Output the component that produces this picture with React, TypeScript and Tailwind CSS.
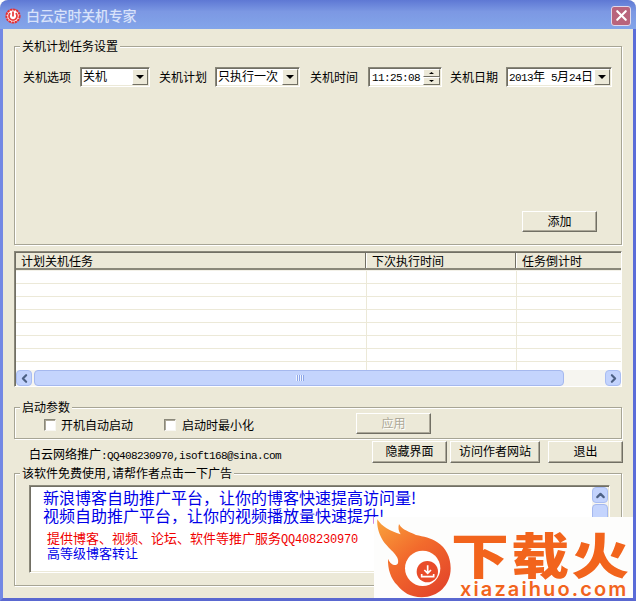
import type { ReactNode } from "react";
import { ChevronLeft, ChevronRight, ChevronUp, X } from "lucide-react";

const ROWS = [1, 2, 3, 4, 5, 6, 7, 8];

// Half-width characters take exactly half of a CJK cell
const Latin = ({ children }: { children: ReactNode }) => (
  <span className="font-['Liberation_Mono'] text-[11px] leading-none tracking-[-0.6px] whitespace-pre">
    {children}
  </span>
);

const GroupBox = ({
  title,
  className,
  children,
}: {
  title: ReactNode;
  className: string;
  children: ReactNode;
}) => (
  <section
    className={`border border-[#a7a595] shadow-[inset_1px_1px_0_#fff,1px_1px_0_#fff] ${className}`}
  >
    <h2 className="-mt-2 ml-[5px] h-3.5 w-fit bg-[#ece9d8] px-0.5 leading-3.5">
      {title}
    </h2>
    {children}
  </section>
);

const Button = ({
  className,
  disabled,
  children,
}: {
  className: string;
  disabled?: boolean;
  children: ReactNode;
}) => (
  <button
    type="button"
    disabled={disabled}
    className={`flex items-center justify-center border border-t-white border-l-white border-r-[#716f64] border-b-[#716f64] pb-0.5 shadow-[inset_-1px_-1px_0_#aca899] disabled:text-[#aca899] disabled:[text-shadow:1px_1px_0_#fff] ${className}`}
  >
    {children}
  </button>
);

const Caret = ({ className = "h-1 w-2" }: { className?: string }) => (
  <svg viewBox="0 0 8 4" preserveAspectRatio="none" className={className}>
    <path d="M0 0h8L4 4z" fill="#000" />
  </svg>
);

const FIELD =
  "flex h-5 shrink-0 border border-t-[#8a887a] border-l-[#8a887a] border-r-white border-b-white bg-white shadow-[inset_1px_1px_0_#716f64,inset_-1px_-1px_0_#ece9d8]";

const Select = ({ className, children }: { className: string; children: ReactNode }) => (
  <div className={`${FIELD} p-px ${className}`}>
    <span className="grow pl-px leading-[14px] whitespace-nowrap">{children}</span>
    <span className="flex h-4 w-4 shrink-0 items-center justify-center border border-t-white border-l-white border-r-[#716f64] border-b-[#716f64] bg-[#ece9d8]">
      <Caret />
    </span>
  </div>
);

const Checkbox = () => (
  <span className="h-3 w-3 border border-t-[#8a887a] border-l-[#8a887a] border-r-[#f8f7f2] border-b-[#f8f7f2] bg-white shadow-[inset_1px_1px_0_#aca899]" />
);

const SCROLL_BUTTON =
  "flex shrink-0 items-center justify-center rounded-sm border border-[#a9bdf2] bg-[#c3d3fd] text-[#4d6185]";

const FlameLogo = () => (
  <svg viewBox="0 0 249 246" className="h-[82px] w-[83px]">
    <defs>
      <linearGradient id="flame" x1="0" y1="0" x2="0.75" y2="1">
        <stop offset="0" stopColor="#f9a33c" />
        <stop offset="0.5" stopColor="#f26a2c" />
        <stop offset="1" stopColor="#e4472a" />
      </linearGradient>
    </defs>
    <path
      fill="url(#flame)"
      d="M22 7C35 29 60 42 92 52C85 42 84 31 87 21C98 40 118 44 138 54C160 59 184 62 202 76C228 93 242 120 242 154C242 205 204 241 155 241C122 241 98 226 82 205C62 184 53 156 54 125C62 146 80 149 84 138C91 115 51 94 36 66C26 48 20 27 22 7Z"
    />
    <circle cx="158" cy="154" r="53" fill="#fff" />
    <circle cx="172" cy="164" r="32" fill="#e94c2a" />
    <path
      d="M173 145v22M163 159l10 10 10-10M155 171v8h36v-8"
      fill="none"
      stroke="#fff"
      strokeWidth="5"
    />
  </svg>
);

const App = () => {
  return (
    <div className="relative flex h-[601px] w-[636px] flex-col overflow-hidden rounded-t-lg bg-[#ece9d8] font-['Noto_Sans_CJK_SC',sans-serif] text-[12px] text-black">
      <header className="flex h-[29px] shrink-0 items-center bg-linear-to-b from-[#5e78d4] via-[#7c98e3] via-40% to-[#83a5ea] pt-0.5 pr-[5px] pl-[5px]">
        <svg viewBox="0 0 16 16" className="h-4 w-4">
          <circle cx="8" cy="8" r="6.6" fill="#fff" stroke="#e82f2f" strokeWidth="2" strokeDasharray="2.5 0.6" />
          <path d="M5.2 5.2a4 4 0 1 0 5.6 0M8 3.5v5" fill="none" stroke="#e84040" strokeWidth="1.8" />
        </svg>
        <h1 className="ml-[5px] grow text-[14px] font-medium tracking-[-0.2px] text-[#d8e2fa]">
          白云定时关机专家
        </h1>
        <button
          type="button"
          className="flex h-5 w-5 items-center justify-center rounded-[3px] border border-[#dfd9ec] bg-[#b9647c] text-white"
        >
          <X size={17} strokeWidth={3} className="shrink-0" />
        </button>
      </header>

      <main className="flex grow flex-col border-x-3 border-b-3 border-l-[#7388e4] border-r-[#5a6cd8] border-b-[#5a68d0] px-[11px] pt-[17px]">
        <GroupBox title="关机计划任务设置" className="h-[199px] shrink-0">
          <div className="mt-3.5 flex h-5 items-center pl-2">
            <label className="w-[57px] shrink-0">关机选项</label>
            <Select className="w-[70px]">关机</Select>
            <label className="ml-[9px] w-14 shrink-0">关机计划</label>
            <Select className="w-[85px]">只执行一次</Select>
            <label className="ml-2.5 w-[58px] shrink-0">关机时间</label>
            <div className={`${FIELD} w-[74px] p-px`}>
              <span className="grow pl-0.5 leading-[14px]">
                <Latin>11:25:08</Latin>
              </span>
              <span className="flex w-[17px] flex-col bg-[#ece9d8]">
                <span className="flex h-2 items-center justify-center border border-t-white border-l-white border-r-[#716f64] border-b-[#716f64]">
                  <Caret className="h-0.5 w-[5px] rotate-180" />
                </span>
                <span className="flex h-2 items-center justify-center border border-t-white border-l-white border-r-[#716f64] border-b-[#716f64]">
                  <Caret className="h-0.5 w-[5px]" />
                </span>
              </span>
            </div>
            <label className="ml-2 w-14 shrink-0">关机日期</label>
            <Select className="w-[106px]">
              <Latin>2013</Latin>年<Latin> 5</Latin>月<Latin>24</Latin>日
            </Select>
          </div>
          <Button className="mt-[124px] ml-[507px] h-[21px] w-[75px]">添加</Button>
        </GroupBox>

        <section className="mt-1.5 flex h-[136px] shrink-0 flex-col border border-t-[#8a887a] border-l-[#8a887a] border-r-white border-b-white bg-white shadow-[inset_1px_1px_0_#716f64]">
          <div className="mt-px ml-px grid h-[17px] shrink-0 grid-cols-[350px_150px_1fr] border-b-2 border-[#8a887a] bg-[#ece9d8] leading-[15px]">
            <span className="border-r border-[#716f64] pl-[5px]">计划关机任务</span>
            <span className="border-r border-l border-r-[#716f64] border-l-white pl-[5px]">
              下次执行时间
            </span>
            <span className="border-l border-white pl-[5px]">任务倒计时</span>
          </div>
          <div className="ml-px h-[100px] shrink-0 overflow-hidden border-t border-[#f3f1e8]">
            {ROWS.map((row) => (
              <div
                key={row}
                className="grid h-[13px] grid-cols-[351px_150px_1fr] border-b border-[#ece9d8]"
              >
                <span className="border-r border-[#ece9d8]" />
                <span className="border-r border-[#ece9d8]" />
              </div>
            ))}
          </div>
          <div className="ml-px flex h-4 bg-[#f6f5f0]">
            <span className={`${SCROLL_BUTTON} w-4`}>
              <ChevronLeft size={13} strokeWidth={4} />
            </span>
            <span className="ml-0.5 flex w-[530px] items-center justify-center gap-px rounded-sm border border-[#a5b8ee] bg-[#c4d4fd]">
              {[0, 1, 2, 3].map((i) => (
                <span key={i} className="h-1.5 w-px bg-[#eef3ff] shadow-[1px_0_0_#8da6e8]" />
              ))}
            </span>
            <span className={`${SCROLL_BUTTON} ml-auto w-4`}>
              <ChevronRight size={13} strokeWidth={4} />
            </span>
          </div>
        </section>

        <GroupBox title="启动参数" className="mt-5 h-8 shrink-0">
          <div className="-mt-px flex h-[21px] items-center pl-[29px]">
            <label className="flex w-[120px] items-center gap-[5px] pt-[3px]">
              <Checkbox />
              开机自动启动
            </label>
            <label className="flex w-48 items-center gap-1.5 pt-[3px]">
              <Checkbox />
              启动时最小化
            </label>
            <Button disabled className="h-[21px] w-[75px]">
              应用
            </Button>
          </div>
        </GroupBox>

        <div className="mt-0.5 -mr-px flex h-[22px] shrink-0 items-center pl-[15px]">
          <p className="w-[343px] pt-1">
            白云网络推广<Latin>:QQ408230970,isoft168@sina.com</Latin>
          </p>
          <Button className="h-[22px] w-[75px]">隐藏界面</Button>
          <Button className="ml-[3px] h-[22px] w-[90px]">访问作者网站</Button>
          <Button className="ml-2 h-[22px] w-[75px]">退出</Button>
        </div>

        <GroupBox
          title={
            <>
              该软件免费使用<Latin>,</Latin>请帮作者点击一下广告
            </>
          }
          className="mt-2.5 h-[113px] shrink-0"
        >
          <div className="mt-[5px] ml-3.5 flex h-[88px] w-[581px] border border-t-[#8a887a] border-l-[#8a887a] border-r-white border-b-white bg-white p-px shadow-[inset_1px_1px_0_#716f64,inset_-1px_-1px_0_#ece9d8]">
            <div className="grow pt-px pl-3 whitespace-nowrap text-[#0000e8]">
              <p className="text-[16px] leading-[18px]">
                新浪博客自助推广平台，让你的博客快速提高访问量!
              </p>
              <p className="text-[16px] leading-[18px]">
                视频自助推广平台，让你的视频播放量快速提升!
              </p>
              <p className="mt-1.5 h-[15px] pl-1 text-[13px] leading-[15px] text-[#f00000]">
                提供博客、视频、论坛、软件等推广服务
                <span className="font-['Liberation_Mono'] text-[12px] leading-none tracking-[-0.2px]">
                  QQ408230970
                </span>
              </p>
              <p className="pl-1 text-[13px] leading-[15px]">高等级博客转让</p>
            </div>
            <div className="flex w-4 shrink-0 flex-col gap-px bg-[#f6f5f0]">
              <span className={`${SCROLL_BUTTON} h-4`}>
                <ChevronUp size={13} strokeWidth={4} />
              </span>
              <span className="h-10 rounded-sm border border-[#a5b8ee] bg-[#c4d4fd]" />
            </div>
          </div>
        </GroupBox>
      </main>

      {/* Download site banner laid over the bottom right corner */}
      <aside className="absolute top-[517px] left-[374px] flex h-[81px] w-[259px] bg-[#fdfdfc] text-[#f2641c]">
        <div className="-ml-1 shrink-0">
          <FlameLogo />
        </div>
        <div className="-ml-0.5 w-[182px] shrink-0 pt-2.5">
          <p className="h-[53px] w-[153px] origin-left scale-x-[1.18] text-[49px] leading-[51px] font-black tracking-[2px] whitespace-nowrap">
            下载火
          </p>
          <p className="pl-[9px] font-['Inter'] text-[20px] leading-[18px] font-semibold tracking-[2.1px] whitespace-nowrap">
            xiazaihuo.com
          </p>
        </div>
      </aside>
    </div>
  );
};

export default App;
